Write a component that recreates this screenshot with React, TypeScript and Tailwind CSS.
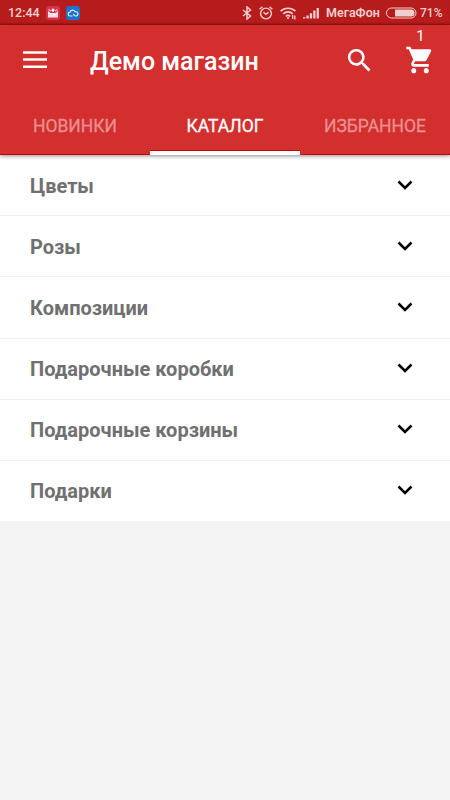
import React from "react";

const categories = [
  "Цветы",
  "Розы",
  "Композиции",
  "Подарочные коробки",
  "Подарочные корзины",
  "Подарки",
];

function StatusBar() {
  return (
    <div className="flex h-[25px] items-center bg-[#b71c1c] pl-[8px] text-[12px] font-medium text-[#f1cfcf] shadow-[inset_0_-2px_2px_-1px_rgba(90,0,0,0.45)]">
      <span className="w-[38px] whitespace-nowrap pt-[2px] text-[12.5px] leading-none">12:44</span>
      <svg className="block h-[14px] w-[14px]" viewBox="0 0 14 14">
        <rect width="14" height="14" rx="3" fill="#d9304c" />
        <path d="M2 5l2.500 2h5L12 5v6.500H2z" fill="#f7e3e5" />
        <path d="M2.500 3.200l2.300 2M11.500 3.200l-2.300 2" stroke="#f2b4bd" strokeWidth="1.200" />
        <path d="M7 2.200l1.800 1.900L7 6.200 5.200 4.100z" fill="#fff" />
      </svg>
      <svg className="ml-[6px] block h-[14px] w-[14px]" viewBox="0 0 14 14">
        <rect width="14" height="14" rx="3" fill="#1d72cb" />
        <path
          d="M6.500 10H4.200a1.900 1.900 0 0 1-.2-3.800 2.700 2.700 0 0 1 5.100-.5 2.200 2.200 0 1 1 .6 4.300c-1.400 0-2.100-1.200-2.300-2.200"
          fill="none"
          stroke="#d5e6f8"
          strokeWidth="1.200"
        />
      </svg>
      <svg className="ml-[162px] block h-[14px] w-[10px]" viewBox="0 0 10 14" fill="none" stroke="#f1cfcf" strokeWidth="1.500">
        <path d="M1 4l7.500 6L5 13V1l3.500 3L1 10" />
      </svg>
      <svg className="ml-[7px] block h-[14px] w-[14px]" viewBox="0 0 14 14" fill="none" stroke="#f1cfcf" strokeWidth="1.400">
        <circle cx="7" cy="7.500" r="5.400" />
        <path d="M4.500 6.300L7 8.300l2.500-2M.6 3.300L3.500 .8M13.400 3.300L10.500 .8" />
      </svg>
      <svg className="ml-[7px] block h-[14px] w-[18px]" viewBox="0 0 18 14" fill="none" stroke="#f1cfcf" strokeWidth="1.700">
        <path d="M.6 5.200a10.800 10.800 0 0 1 14.800 0M3.200 7.800a7 7 0 0 1 9.600 0M5.800 10.300a3.400 3.400 0 0 1 4.400 0" />
        <circle cx="8" cy="12" r="1.100" fill="#f1cfcf" stroke="none" />
        <path d="M12.700 13V9M14.800 9.500v4" strokeWidth="1.300" />
      </svg>
      <svg className="ml-[5px] block h-[14px] w-[17px]" viewBox="0 0 17 14" fill="#f1cfcf">
        <path d="M0 11.300h2.300v1.200H0zM3.400 9.600h2.300v2.900H3.400zM6.800 7.300h2.300v5.200H6.800zM10.200 4.500h2.300v8h-2.300zM13.600 2h2.300v10.500h-2.300z" />
      </svg>
      <span className="ml-[6px] w-[54px] whitespace-nowrap pt-[2px] text-[12.5px] font-semibold leading-none">МегаФон</span>
      <svg className="ml-[6px] block h-[12px] w-[31px]" viewBox="0 0 31 12">
        <rect x=".5" y="1" width="29.500" height="10" rx="5" fill="none" stroke="#f1cfcf" />
        <path d="M9 2.500H25a3.500 3.500 0 0 1 0 7H9z" fill="#f1cfcf" />
      </svg>
      <span className="ml-[3px] whitespace-nowrap pt-[1px] text-[12px] leading-none">71%</span>
    </div>
  );
}

function Toolbar() {
  return (
    <header className="flex h-[70px] items-center pl-[23px]">
      <svg className="block h-[18px] w-[24px]" viewBox="0 0 24 18" fill="#fff">
        <path d="M0 .2h24v2.600H0zM0 7.200h24v2.600H0zM0 14.400h24v2.600H0z" />
      </svg>
      <h1 className="ml-[43px] w-[254px] whitespace-nowrap pt-[3px] text-[25px] font-medium leading-[30px] text-white">
        Демо магазин
      </h1>
      <svg className="block h-[31px] w-[31px]" viewBox="0 0 24 24" fill="#fff">
        <path d="M15.500 14h-.79l-.28-.27A6.471 6.471 0 0 0 16 9.500 6.500 6.500 0 1 0 9.500 16c1.610 0 3.090-.59 4.230-1.570l.27.28v.79l5 4.990L20.490 19l-4.990-5zm-6 0C7.010 14 5 11.990 5 9.500S7.010 5 9.500 5 14 7.010 14 9.500 11.990 14 9.500 14z" />
      </svg>
      <div className="ml-[29px] flex h-[70px] w-[31px] flex-col items-center">
        <span className="ml-[2px] mt-[3px] h-[16px] text-[15px] leading-[17px] text-white">1</span>
        <svg className="ml-[1px] block h-[32px] w-[30px]" viewBox="0 0 24 24" preserveAspectRatio="none" fill="#fff">
          <path d="M7 18c-1.100 0-1.990.9-1.990 2S5.900 22 7 22s2-.9 2-2-.9-2-2-2zM1 2v2h2l3.600 7.590-1.350 2.450c-.16.280-.25.610-.25.960 0 1.100.9 2 2 2h12v-2H7.420c-.14 0-.25-.11-.25-.25l.03-.12.900-1.630h7.450c.75 0 1.410-.41 1.750-1.030l3.580-6.490A1 1 0 0 0 20 4H5.210l-.94-2H1zm16 16c-1.100 0-1.990.9-1.990 2s.89 2 1.990 2 2-.9 2-2-.9-2-2-2z" />
        </svg>
      </div>
    </header>
  );
}

function Tabs() {
  return (
    <nav className="grid h-[60px] grid-cols-3 grid-rows-[60px] text-center text-[17.5px] leading-[62px] text-[#ea8f8f] [-webkit-text-stroke:0.3px]">
      <div className="h-[60px] border-b border-[#c80000]">НОВИНКИ</div>
      <div className="flex h-[60px] flex-col text-white">
        <span className="h-[55px]">КАТАЛОГ</span>
        <i className="block h-[5px] border-t border-[#c80000] bg-white" />
      </div>
      <div className="h-[60px] border-b border-[#c80000]">ИЗБРАННОЕ</div>
    </nav>
  );
}

export default function App() {
  return (
    <div className="h-[800px] w-[450px] overflow-hidden bg-[#f4f4f4] font-['Roboto',sans-serif]">
      <StatusBar />
      <div className="relative bg-[#d32f2f] shadow-[0_1px_4px_rgba(0,0,0,0.45)]">
        <Toolbar />
        <Tabs />
      </div>
      <ul>
        {categories.map((name) => (
          <li
            key={name}
            className="flex h-[61.250px] items-center justify-between border-b border-[#f1f1f1] bg-white pl-[30px] pr-[37px] first:h-[61px] last:h-[60px] last:border-white"
          >
            <span className="whitespace-nowrap pt-[1px] text-[20px] font-bold leading-[24px] text-[#707070]">{name}</span>
            <svg className="mb-[1px] block h-[10px] w-[16px]" viewBox="0 0 16 10" fill="none" stroke="#000" strokeWidth="2.500">
              <path d="M1.500 1.500L8 8l6.500-6.500" />
            </svg>
          </li>
        ))}
      </ul>
    </div>
  );
}
